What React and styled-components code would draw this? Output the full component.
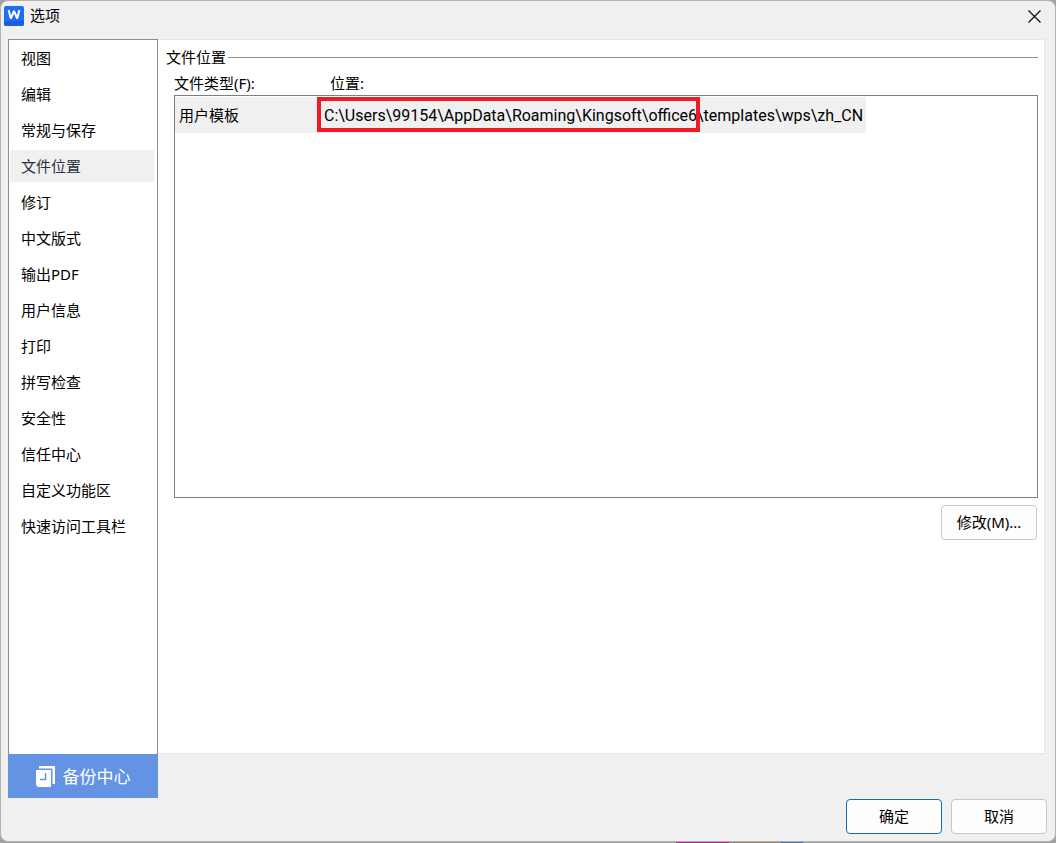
import React, { useState } from 'react';
import styled, { createGlobalStyle } from 'styled-components';

const GlobalStyle = createGlobalStyle`
*{
  box-sizing: border-box;
}

body{
  margin: 0;
  background: #c4c6c6;
  color: #000;
  font-family: "Noto Sans", "Noto Sans CJK SC", sans-serif;
  font-size: 15px;
  line-height: 20px;
}

button{
  font: inherit;
  color: inherit;
  cursor: pointer;
}
`;

/* the thin strip under the window is the desktop showing through */
const Desktop = styled.div`
display: flex;
min-height: 100vh;
padding-bottom: 1px;
background: linear-gradient(to right, #a3a3a3 64%, #a3267c 64%, #a3267c 69%, #8c8676 69%, #8c8676 74%, #4e6a9c 74%, #4e6a9c 76%, #a3a3a3 76%);
`;

const Window = styled.div`
flex: 1;
display: flex;
flex-direction: column;
padding: 0 8px 7px 7px;
border: 1px solid #b0b1b1;
border-radius: 8px;
background: #f0f0f0;
`;

const TitleBar = styled.header`
display: flex;
align-items: center;
gap: 6px;
height: 38px;
margin-left: -4px;
padding: 0 2px 8px 0;

h1{
  flex: 1;
  margin: 0;
  padding-bottom: 2px;
  font-size: 15px;
  font-weight: 400;
}
`;

const CloseButton = styled.button`
display: flex;
padding: 4px;
border: 0;
background: none;
`;

const Main = styled.div`
flex: 1;
display: flex;
`;

const Sidebar = styled.nav`
flex: none;
display: flex;
flex-direction: column;
width: 150px;

ul{
  flex: 1;
  display: flex;
  flex-direction: column;
  gap: 4px;
  margin: 0;
  padding: 2px 3px 2px 1px;
  border: 1px solid #8c8f91;
  border-bottom: 0;
  background: #fff;
  list-style: none;
}
`;

const NavButton = styled.button`
display: block;
width: 100%;
height: 32px;
padding: 0 11px;
border: 0;
background: ${props => (props.$active ? '#f0f0f0' : 'none')};
color: ${props => (props.$active ? '#27303c' : '#000')};
text-align: left;
`;

const BackupButton = styled.button`
display: flex;
align-items: center;
justify-content: center;
gap: 8px;
height: 44px;
padding: 1px 0 0;
border: 0;
background: #6593e3;
color: #fff;
font-size: 17px;
`;

const Panel = styled.main`
flex: 1;
display: flex;
flex-direction: column;
margin: 0 2px 44px 0;
padding: 7px 6px 8px 8px;
border: 1px solid #e6e6e6;
border-left: 0;
background: #fff;
`;

const GroupTitle = styled.h2`
display: flex;
align-items: center;
gap: 2px;
margin: 0 0 6px;
font-size: 15px;
font-weight: 400;

&::after{
  content: "";
  flex: 1;
  border-top: 1px solid #909090;
}
`;

const PathTable = styled.table`
display: block;
margin-left: 8px;

thead, tbody{
  display: block;
}

tr{
  display: flex;
}

th, td{
  padding: 0;
  font-weight: 400;
  text-align: left;
}

th:first-child{
  width: 156px;
}

thead{
  height: 22px;
}

tbody{
  height: 403px;
  padding-top: 1px;
  border: 1px solid #7f7f7f;
}
`;

const PathRow = styled.tr`
width: max-content;
height: 36px;
align-items: center;
background: #f0f0f0;

td:first-child{
  width: 145px;
  padding-left: 4px;
}

td:last-child{
  padding: 2px 3px 0 4px;
  font-family: Roboto, sans-serif;
  font-size: 16px;
}
`;

const Marked = styled.span`
position: relative;

&::after{
  content: "";
  position: absolute;
  inset: -9px -3px -7px -7px;
  border: 4px solid #ed1c24;
}
`;

const DialogButton = styled.button`
width: 96px;
height: 35px;
padding: 0 0 2px;
border: 1px solid ${props => (props.$primary ? '#0f6cb5' : '#c8c8c8')};
border-radius: 4px;
background: #fdfdfd;
`;

const PanelActions = styled.div`
display: flex;
justify-content: flex-end;
margin-top: 7px;
padding-right: 1px;
`;

const Footer = styled.footer`
display: flex;
justify-content: flex-end;
gap: 9px;
margin-top: 1px;
`;

const sections = [
  '视图',
  '编辑',
  '常规与保存',
  '文件位置',
  '修订',
  '中文版式',
  '输出PDF',
  '用户信息',
  '打印',
  '拼写检查',
  '安全性',
  '信任中心',
  '自定义功能区',
  '快速访问工具栏',
];

const AppLogo = () => (
  <svg width="20" height="20" viewBox="0 0 20 20" aria-hidden="true">
    <rect width="20" height="20" rx="2" fill="#1f6df2" />
    <path d="M0 15h20v3a2 2 0 0 1-2 2H2a2 2 0 0 1-2-2z" fill="#1a5fe0" />
    <path d="M4.600 4 6.800 12.500 10 5 13.200 12.500 15.400 4" fill="none" stroke="#fff" strokeWidth="2" strokeLinejoin="bevel" />
  </svg>
);

const CloseIcon = () => (
  <svg width="13" height="13" viewBox="0 0 13 13" aria-hidden="true">
    <path d="M0.5 0.5 12.5 12.5M12.5 0.5 0.5 12.5" stroke="#111" strokeWidth="1.3" />
  </svg>
);

const BackupIcon = () => (
  <svg width="19" height="21" viewBox="0 0 19 21" aria-hidden="true">
    <path d="M3 0h16v18h-2.500V2.500H3z" fill="#fff" />
    <path d="M0 4h15v17H2l-2-2z" fill="#fff" />
    <path d="M9.500 7v6.500H4" fill="none" stroke="#6593e3" strokeWidth="1.500" />
  </svg>
);

const App = () => {
  const [active, setActive] = useState('文件位置');

  return (
    <Desktop>
      <GlobalStyle />
      <Window>
        <TitleBar>
          <AppLogo />
          <h1>选项</h1>
          <CloseButton aria-label="关闭"><CloseIcon /></CloseButton>
        </TitleBar>
        <Main>
          <Sidebar>
            <ul>
              {sections.map(name => (
                <li key={name}>
                  <NavButton $active={name === active} onClick={() => setActive(name)}>{name}</NavButton>
                </li>
              ))}
            </ul>
            <BackupButton><BackupIcon />备份中心</BackupButton>
          </Sidebar>
          <Panel>
            <GroupTitle>文件位置</GroupTitle>
            <PathTable>
              <thead>
                <tr>
                  <th>文件类型(F):</th>
                  <th>位置:</th>
                </tr>
              </thead>
              <tbody>
                <PathRow>
                  <td>用户模板</td>
                  <td><Marked>C:\Users\99154\AppData\Roaming\Kingsoft\office6</Marked>\templates\wps\zh_CN</td>
                </PathRow>
              </tbody>
            </PathTable>
            <PanelActions>
              <DialogButton>修改(M)...</DialogButton>
            </PanelActions>
          </Panel>
        </Main>
        <Footer>
          <DialogButton $primary>确定</DialogButton>
          <DialogButton>取消</DialogButton>
        </Footer>
      </Window>
    </Desktop>
  );
};

export default App;
